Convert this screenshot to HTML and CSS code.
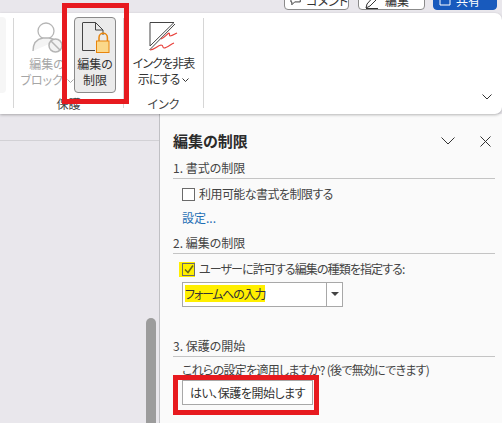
FILE: index.html
```html
<!DOCTYPE html>
<html lang="ja">
<head>
<meta charset="utf-8">
<title>編集の制限</title>
<link rel="stylesheet" href="styles.css">
</head>
<body>
<div class="titlebar">
  <div class="tbtn c1"><svg width="12" height="12" viewBox="0 0 12 12"><path d="M1 0h10v7H5L2 10V7H1z" fill="none" stroke="#333"/></svg><span>コメント</span></div>
  <div class="tbtn c2"><svg width="16" height="16" viewBox="0 0 16 16"><path d="M2 15l1-4 8-9 3 3-8 8zM2 15.500h12" fill="none" stroke="#333"/></svg><span>編集</span></div>
  <div class="tbtn c3"><svg width="12" height="12" viewBox="0 0 12 12"><path d="M1 1h10v9H1z" fill="none" stroke="#fff"/></svg><span>共有</span></div>
</div>
<div class="ribbon">
  <div class="leftstub"></div>
  <div class="sep s1"></div>
  <div class="group protect">
    <div class="cmds">
      <div class="cmd block">
        <svg class="ic" width="31" height="31" viewBox="0 0 31 31">
          <circle cx="14" cy="9" r="8" fill="#fff" stroke="#b5b5b5" stroke-width="1.300"/>
          <path d="M1 29c0-8 4-12 10-13h6c3 .5 5 1.500 7 3" fill="#f4f4f4" stroke="#b5b5b5" stroke-width="1.300"/>
          <circle cx="23.500" cy="23.500" r="6.500" fill="#f2f2f2" stroke="#b5b5b5" stroke-width="1.500"/>
          <path d="M19 19l9 9" stroke="#b5b5b5" stroke-width="1.500"/>
        </svg>
        <div class="lbl">編集の<br>ブロック <svg class="car" width="7" height="4" viewBox="0 0 7 4"><path d="M.5.500l3 3 3-3" fill="none" stroke="#a6a6a6"/></svg></div>
      </div>
      <div class="cmd active">
        <svg class="ic" width="28" height="31" viewBox="0 0 28 31">
          <path d="M1 .500h12.500l7.500 7.500v5" fill="none" stroke="#444"/>
          <path d="M13.500 .500V8H21" fill="none" stroke="#444"/>
          <path d="M.500 .500v28H13" fill="none" stroke="#444"/>
          <path d="M17 19v-3.500a4.200 4.200 0 0 1 8.400 0V19" fill="none" stroke="#e8850c" stroke-width="1.500"/>
          <rect x="14.500" y="19" width="12.500" height="11.500" fill="#fbd88a" stroke="#e8850c"/>
        </svg>
        <div class="lbl">編集の<br>制限</div>
      </div>
    </div>
    <div class="gname">保護</div>
  </div>
  <div class="sep s2"></div>
  <div class="group ink">
    <div class="cmd inkcmd">
      <svg class="ic" width="30" height="29" viewBox="0 0 30 29">
        <path d="M1 .500h24L1 24z" fill="#fff" stroke="#444"/>
        <path d="M.500 28L26 2" stroke="#444"/>
        <path d="M12 17c3-1 6-5 8-6 1 0 0 3 1 3 2 0 5-2 7-3M1 28c4 0 7-4 11-5 3 0 1 3 3 3 3 0 7-4 10-5" fill="none" stroke="#e8413c" stroke-width="1.200"/>
      </svg>
      <div class="lbl">インクを非表<br>示にする <svg class="car" width="7" height="4" viewBox="0 0 7 4"><path d="M.5.500l3 3 3-3" fill="none" stroke="#333"/></svg></div>
    </div>
    <div class="gname">インク</div>
  </div>
  <div class="sep s3"></div>
  <svg class="collapse" width="10" height="6" viewBox="0 0 10 6"><path d="M.5.500l4.500 4.500 4.500-4.500" fill="none" stroke="#333"/></svg>
</div>
<div class="main">
  <div class="doc">
    <div class="docline"></div>
    <div class="scroll"></div>
  </div>
  <aside class="pane">
    <header class="phead">
      <h1>編集の制限</h1>
      <svg width="14" height="8" viewBox="0 0 14 8"><path d="M.5.500L7 7 13.500.500" fill="none" stroke="#333"/></svg>
      <svg class="x" width="11" height="11" viewBox="0 0 11 11"><path d="M.5.500l10 10M10.500.500l-10 10" fill="none" stroke="#333"/></svg>
    </header>
    <section class="sec one">
      <h2>1. 書式の制限</h2>
      <label class="chk"><span class="box"></span>利用可能な書式を制限する</label>
      <a class="link">設定...</a>
    </section>
    <section class="sec two">
      <h2>2. 編集の制限</h2>
      <label class="chk on"><span class="mark"><span class="box"><svg width="10" height="9" viewBox="0 0 10 9"><path d="M1 4.500l3 3 5-7" fill="none" stroke="#6a6a10" stroke-width="1.500"/></svg></span></span>ユーザーに許可する編集の種類を指定する:</label>
      <div class="select"><span class="val"><mark>フォームへの入力</mark></span><span class="arrow"></span></div>
    </section>
    <section class="sec three">
      <h2>3. 保護の開始</h2>
      <p>これらの設定を適用しますか? (後で無効にできます)</p>
      <button class="start">はい、保護を開始します</button>
    </section>
  </aside>
</div>
<div class="redbox rb1"></div>
<div class="redbox rb2"></div>
</body>
</html>
```
FILE: styles.css
```css
* { box-sizing: border-box; }
html, body { margin: 0; height: 100%; }
body {
  width: 502px; height: 423px; overflow: hidden; position: relative;
  background: #e9e7ec; color: #333;
  font-family: "Noto Sans CJK JP", "Noto Sans", sans-serif; font-size: 12px;
  font-feature-settings: "palt" 1;
}
.titlebar { height: 13px; display: flex; align-items: flex-start; padding-left: 284px; overflow: hidden; }
.tbtn { height: 20px; margin-top: -10px; padding: 2px 0 0 5px; flex: none; border: 1px solid #8b8b8b; border-radius: 4px; background: #fff; display: flex; align-items: center; gap: 5px; font-size: 12px; line-height: 14px; color: #333; white-space: nowrap; }
.c1 { width: 65px; margin-right: 9px; }
.c2 { width: 67px; margin-right: 8px; }
.c3 { width: 64px; background: #185abd; border-color: #185abd; color: #fff; }
.ribbon { height: 101px; position: relative; z-index: 1; background: #fff; border-radius: 0 7px 7px 0; box-shadow: 0 1px 3px rgba(0,0,0,.28); display: flex; padding-top: 4px; }
.leftstub { width: 6px; height: 76px; background: #f6f6f6; border-radius: 0 4px 4px 0; }
.sep { width: 1px; height: 90px; margin-top: 1px; background: #d6d6d6; flex: none; }
.s1 { margin-left: 7px; }
.group { display: flex; flex-direction: column; align-items: center; height: 97px; position: relative; }
.protect { width: 109px; align-items: flex-start; }
.ink { width: 79px; }
.cmds { display: flex; }
.cmd { display: flex; flex-direction: column; align-items: center; text-align: center; font-size: 12px; line-height: 16px; }
.cmd .ic { flex: none; }
.block { width: 60px; color: #a6a6a6; padding: 5px 0 0 6px; }
.block .lbl { margin-top: 3px; white-space: nowrap; }
.active { width: 42px; height: 76px; background: #ebebeb; border: 1px solid #8a8a8a; border-radius: 4px; padding: 4px 0 0 2px; color: #333; }
.active .lbl { margin-top: 3px; margin-left: -2px; }
.inkcmd { width: 78px; padding-top: 5px; }
.inkcmd .lbl { margin-top: 4px; white-space: nowrap; letter-spacing: -.9px; }
.car { vertical-align: 2px; margin-left: 1px; }
.gname { position: absolute; left: 0; right: 0; top: 80px; text-align: center; font-size: 12px; line-height: 14px; color: #444; }
.collapse { position: absolute; right: 10px; top: 81px; }
.main { height: 309px; display: flex; }
.doc { width: 159px; position: relative; background: #e9e7ec; }
.docline { position: absolute; left: 0; right: 0; top: 26px; height: 1px; background: #d2d1d5; }
.scroll { position: absolute; left: 146px; top: 204px; width: 10px; height: 110px; background: #9c9c9c; border-radius: 5px 5px 0 0; }
.pane { width: 343px; background: #fafafa; border-left: 1px solid #c0c0c4; padding: 15px 7px 0 13px; }
.phead { display: flex; align-items: center; height: 24px; }
.phead h1 { margin: 0; font-size: 15px; font-weight: 700; color: #2b2b2b; line-height: 20px; flex: 1; }
.phead svg { margin-right: 25px; }
.phead .x { margin-right: 4px; }
.sec h2 { margin: 0; font-size: 12px; font-weight: 400; line-height: 16px; color: #444; border-bottom: 1px solid #c4c4c4; height: 19px; }
.one { margin-top: 7px; }
.two { margin-top: 9px; }
.chk { display: flex; align-items: center; gap: 4px; padding-left: 9px; font-size: 12px; line-height: 16px; height: 16px; color: #444; }
.one .chk { margin-top: 7px; letter-spacing: -.55px; }
.two .chk { margin-top: 7px; letter-spacing: -.9px; }
.box { width: 13px; height: 13px; border: 1.500px solid #6a6a6a; background: #fff; display: flex; align-items: center; justify-content: center; flex: none; }
.mark { background: #ffef00; padding: 1px 0 1px 3px; margin-left: -3px; display: flex; }
.on .box { background: #ffef00; }
.link { display: block; margin: 8px 0 0 9px; color: #1f6fb5; font-size: 12px; line-height: 16px; }
.select { margin: 5px 0 0 9px; width: 161px; height: 25px; border: 1px solid #a8a8a8; background: #fff; display: flex; }
.val { flex: 1; padding: 3px 0 0 2px; font-size: 12px; line-height: 16px; color: #333; letter-spacing: -1.2px; }
mark { background: #ffef00; color: inherit; }
.arrow { width: 16px; border-left: 1px solid #a8a8a8; position: relative; }
.arrow::after { content: ""; position: absolute; left: 4px; top: 9px; border: 4px solid transparent; border-top: 4px solid #444; border-bottom: 0; }
.three { margin-top: 32px; }
.three h2 { height: 18px; line-height: 14px; }
.three p { margin: 5px 0 0 9px; font-size: 12px; line-height: 16px; color: #444; white-space: nowrap; letter-spacing: -.72px; }
.start { display: block; margin: 2px 0 0 9px; width: 131px; height: 25px; border: 1px solid #a8a8a8; background: #fff; font: inherit; font-feature-settings: inherit; color: #333; padding: 0; white-space: nowrap; letter-spacing: -.5px; }
.redbox { position: absolute; border: 5px solid #e71a1f; z-index: 2; pointer-events: none; }
.rb1 { left: 62px; top: 3px; width: 67px; height: 101px; }
.rb2 { left: 173px; top: 375px; width: 146px; height: 40px; }
```
